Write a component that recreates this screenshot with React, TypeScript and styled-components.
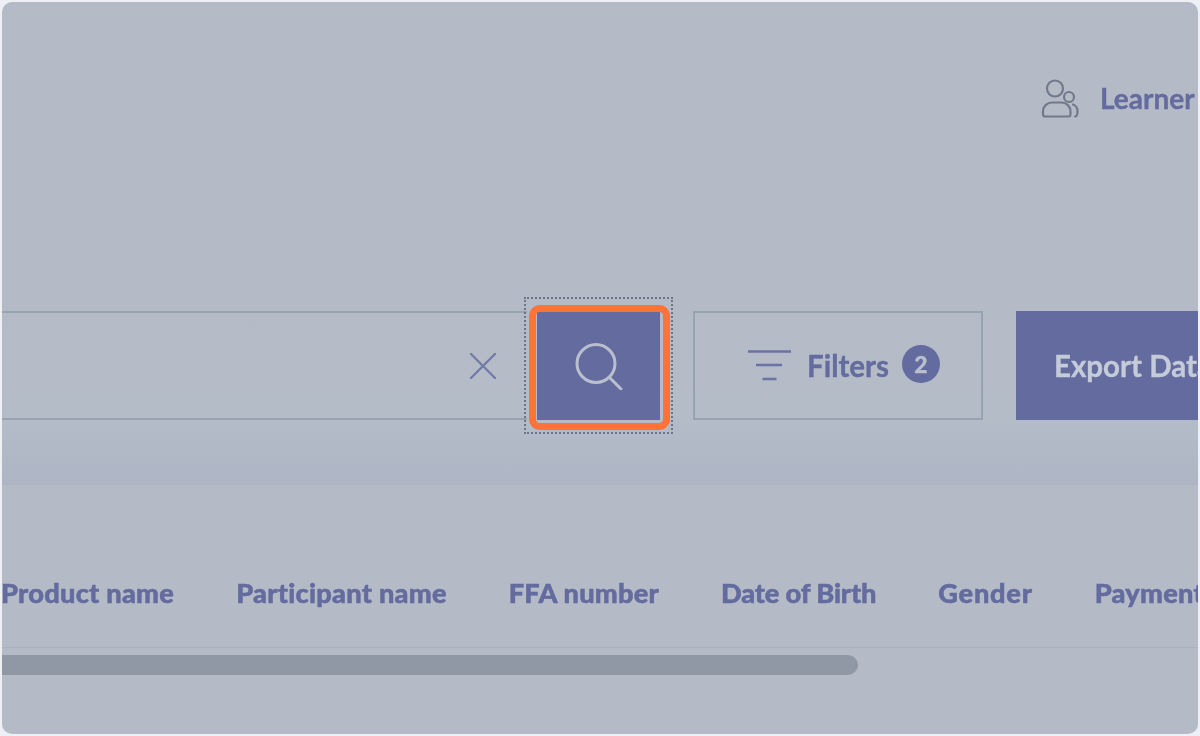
import React from 'react';
import styled, { createGlobalStyle } from 'styled-components';

const primary = '#636b9f';
const panel = '#b4bbc7';
const line = '#98a3b2';
const iconLight = '#b9bfcd';

const GlobalStyle = createGlobalStyle`
  html, body {
    margin: 0;
    padding: 0;
    width: 1200px;
    height: 736px;
    overflow: hidden;
    background: #eef0f5;
  }
`;

const Frame = styled.div`
  box-sizing: border-box;
  margin: 2px;
  width: 1196px;
  height: 732px;
  background: ${panel};
  border-radius: 10px;
  overflow: hidden;
  display: flex;
  flex-direction: column;
  font-family: Lato, 'Liberation Sans', sans-serif;
  font-weight: 700;
  color: ${primary};
  filter: blur(0.7px);
  -webkit-text-stroke: 0.35px currentColor;
`;

const TopBar = styled.div`
  height: 309px;
  flex: none;
  display: flex;
  align-items: flex-start;
  padding: 77px 0 0 1039px;
  box-sizing: border-box;
  gap: 19px;
  white-space: nowrap;
`;

const UserLabel = styled.span`
  font-size: 28px;
  line-height: 38px;
`;

const ToolbarWrap = styled.div`
  height: 174px;
  flex: none;
  box-sizing: border-box;
  background: linear-gradient(#b4bbc7 0%, #b4bcc8 60%, #aeb6c5 100%);
  border-bottom: 1px solid #adb4c2;
`;

const Toolbar = styled.div`
  display: flex;
  height: 109px;
  white-space: nowrap;
`;

const SearchField = styled.div`
  box-sizing: border-box;
  width: 525px;
  flex: none;
  border-top: 2px solid ${line};
  border-bottom: 2px solid ${line};
  display: flex;
  align-items: center;
  justify-content: flex-end;
  padding-right: 30px;
`;

const SearchButton = styled.div`
  position: relative;
  box-sizing: border-box;
  flex: none;
  width: 123px;
  margin-left: 10px;
  background: ${primary};
  display: flex;
  align-items: center;
  justify-content: center;

  &::before {
    content: '';
    position: absolute;
    left: -8px;
    right: -10px;
    top: -6px;
    bottom: -10px;
    border: 7px solid #ff7339;
    border-radius: 11px;
  }

  &::after {
    content: '';
    position: absolute;
    left: -13px;
    right: -13px;
    top: -14px;
    bottom: -14px;
    border: 2px dotted #6d7689;
  }
`;

const FiltersButton = styled.div`
  box-sizing: border-box;
  flex: none;
  width: 290px;
  margin-left: 33px;
  border: 2px solid ${line};
  display: flex;
  align-items: center;
  padding-left: 53px;
  font-size: 29.5px;
`;

const FiltersLabel = styled.span`
  margin-left: 15px;
`;

const CountBadge = styled.span`
  width: 38px;
  height: 38px;
  margin-left: 13px;
  margin-bottom: 3px;
  border-radius: 50%;
  background: ${primary};
  color: ${iconLight};
  font-size: 23px;
  font-weight: 900;
  display: flex;
  align-items: center;
  justify-content: center;
`;

const ExportButton = styled.div`
  box-sizing: border-box;
  flex: none;
  width: 260px;
  margin-left: 33px;
  background: ${primary};
  color: #c5cbd8;
  font-size: 29.5px;
  display: flex;
  align-items: center;
  padding-left: 38px;
`;

const HeaderRow = styled.div`
  flex: none;
  box-sizing: border-box;
  height: 163px;
  border-bottom: 1px solid #aab1bf;
  display: flex;
  gap: 62px;
  margin-left: -1px;
  padding-top: 90px;
  font-size: 27.2px;
  font-weight: 900;
  line-height: 36px;
  white-space: nowrap;
  -webkit-text-stroke: 0.5px currentColor;
`;

const ColumnLabel = styled.span<{ $tracking: number }>`
  letter-spacing: ${p => p.$tracking}px;
`;

const ScrollTrack = styled.div`
  flex: none;
  padding-top: 7px;
`;

const ScrollThumb = styled.div`
  width: 856px;
  height: 20px;
  background: #9098a5;
  border-radius: 0 10px 10px 0;
`;

const columns = [
  { name: 'Product name', tracking: 0.25 },
  { name: 'Participant name', tracking: 0.25 },
  { name: 'FFA number', tracking: 0.25 },
  { name: 'Date of Birth', tracking: -0.15 },
  { name: 'Gender', tracking: 0.75 },
  { name: 'Payment status', tracking: 0.25 },
];

const UsersIcon = () => (
  <svg width="40" height="42" viewBox="0 0 40 42" fill="none" stroke="#717a8a" strokeWidth="2.2" strokeLinecap="round">
    <circle cx="14" cy="9.500" r="8" />
    <circle cx="28" cy="18" r="5" />
    <path d="M4 37.500a2 2 0 0 1-2-2v-3a9 9 0 0 1 9-9h9.500a9 9 0 0 1 9 9v3a2 2 0 0 1-2 2z" />
    <path d="M32 25.500c3 1 4.500 4 4.500 7 0 3-1 5-2.500 5" />
  </svg>
);

const ClearIcon = () => (
  <svg width="28" height="28" viewBox="0 0 28 28" fill="none" stroke="#737ba8" strokeWidth="2.4" strokeLinecap="round">
    <path d="M2 2l24 24M26 2L2 26" />
  </svg>
);

const SearchIcon = () => (
  <svg width="48" height="48" viewBox="0 0 48 48" fill="none" stroke={iconLight} strokeWidth="3" strokeLinecap="round">
    <circle cx="21" cy="21.500" r="19" />
    <path d="M35 36l11 11" />
  </svg>
);

const FilterIcon = () => (
  <svg width="44" height="32" viewBox="0 0 44 32" fill="none" stroke="#6a72a6" strokeWidth="2.600">
    <path d="M0 1.500h43M8 15h26M14.500 29h14" />
  </svg>
);

export default function App() {
  return (
    <>
      <GlobalStyle />
      <Frame>
        <TopBar>
          <UsersIcon />
          <UserLabel>Learner</UserLabel>
        </TopBar>
        <ToolbarWrap>
          <Toolbar>
            <SearchField>
              <ClearIcon />
            </SearchField>
            <SearchButton>
              <SearchIcon />
            </SearchButton>
            <FiltersButton>
              <FilterIcon />
              <FiltersLabel>Filters</FiltersLabel>
              <CountBadge>2</CountBadge>
            </FiltersButton>
            <ExportButton>Export Data</ExportButton>
          </Toolbar>
        </ToolbarWrap>
        <HeaderRow>
          {columns.map(col => (
            <ColumnLabel key={col.name} $tracking={col.tracking}>
              {col.name}
            </ColumnLabel>
          ))}
        </HeaderRow>
        <ScrollTrack>
          <ScrollThumb />
        </ScrollTrack>
      </Frame>
    </>
  );
}
